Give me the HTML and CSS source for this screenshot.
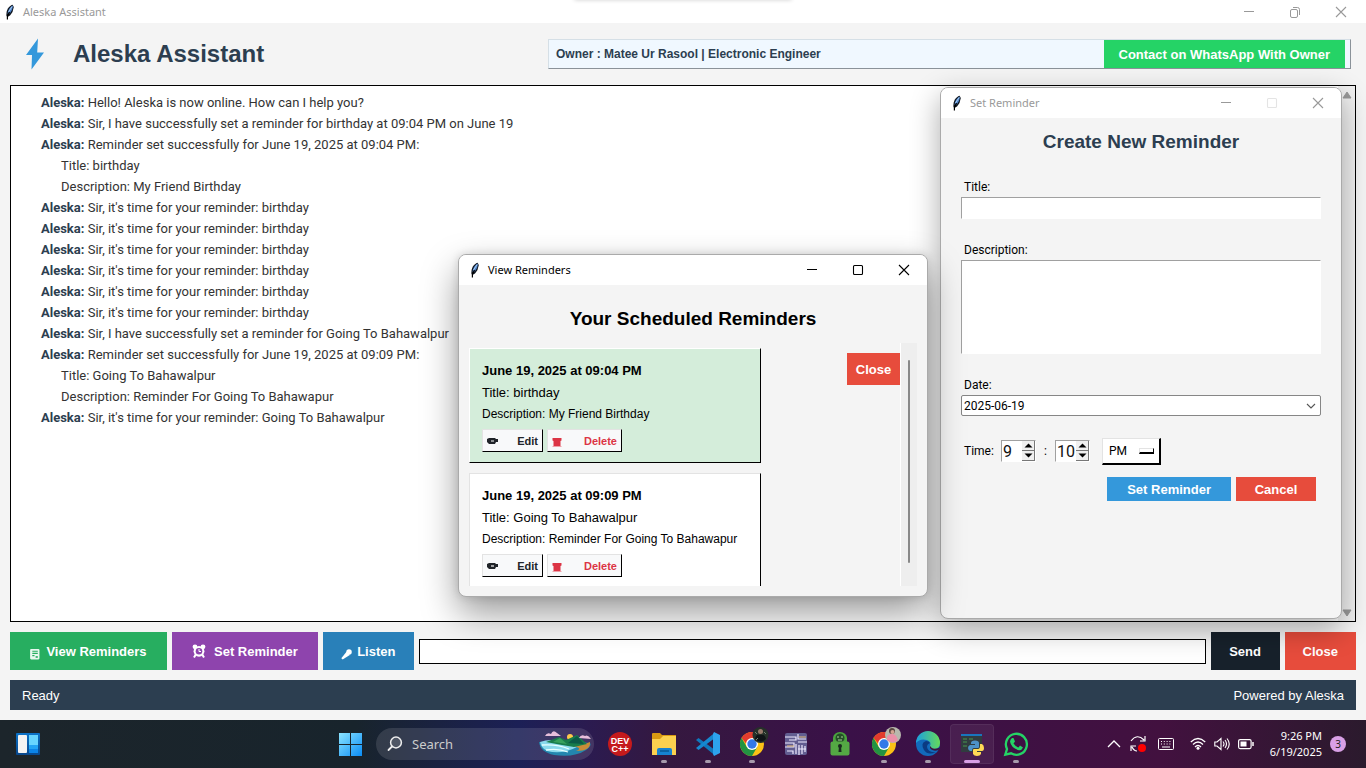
FILE: index.html
```html
<!DOCTYPE html>
<html lang="en">
<head>
<meta charset="utf-8">
<title>Aleska Assistant</title>
<link rel="stylesheet" href="styles.css">
</head>
<body>
<svg class="defs" aria-hidden="true">
  <symbol id="feather" viewBox="0 0 12 16">
    <path d="M8.600 .8C6 1.500 3.200 4.500 2.600 8L2.300 11.500 3.300 13 6 11.500 8.500 8 9.800 3z" fill="#10161f"/>
    <path d="M8.500 1.500C6 3 4 6 3.500 9.800L5.800 9.500 8 6 8.800 3z" fill="#4f86cc"/>
    <path d="M8 2.500L4.600 8" stroke="#a9cdf5" stroke-width="1"/>
    <path d="M5.500 8L3.400 12.500V15.500" stroke="#000" stroke-width="1.200" fill="none"/>
  </symbol>
  <symbol id="cross" viewBox="0 0 12 12"><path d="M1 1L11 11M11 1L1 11" stroke="currentColor" stroke-width="1.100" fill="none"/></symbol>
  <symbol id="dash" viewBox="0 0 12 12"><path d="M1 5.500H11" stroke="currentColor" fill="none"/></symbol>
  <symbol id="square" viewBox="0 0 12 12"><rect x="1.500" y="1.500" width="9" height="9" rx="1" stroke="currentColor" stroke-width="1.100" fill="none"/></symbol>
  <symbol id="pencil" viewBox="0 0 12 8"><path d="M0 2L2 1H8L9 2H11V5H9L8 7H2L0 5z" fill="#202429"/><path d="M4 4H7" stroke="#f8f9fa" stroke-width="1.200"/></symbol>
  <symbol id="bin" viewBox="0 0 10 10"><path d="M.5 1H9.500V3.500L8.500 4V9.500H1.500V4L.5 3.500z" fill="#dc3545"/><path d="M.5 9.500H9.500" stroke="#eea1a9"/></symbol>
  <symbol id="chrome" viewBox="0 0 24 24">
    <circle cx="12" cy="12" r="12" fill="#fbc116"/>
    <path d="M1.600 6A12 12 0 0 1 22.400 6H12L9 15z" fill="#e33b2e"/>
    <path d="M1.600 6A12 12 0 0 0 12 24L17.200 15 12 17 6.800 15z" fill="#229342"/>
    <circle cx="12" cy="12" r="6" fill="#fff"/><circle cx="12" cy="12" r="4.700" fill="#3378e8"/>
  </symbol>
</svg>

<main class="app">
  <header class="titlebar titlebar-main">
    <svg class="feather"><use href="#feather"/></svg>
    <span class="titlebar-text">Aleska Assistant</span>
    <div class="win-controls">
      <button aria-label="Minimize"><svg><use href="#dash"/></svg></button>
      <button aria-label="Restore"><svg viewBox="0 0 12 12"><rect x="1.500" y="3.500" width="7" height="8" rx="1.500" fill="none" stroke="currentColor"/><path d="M4 1.500H8.500Q10.500 1.500 10.500 3.500V9" fill="none" stroke="currentColor"/></svg></button>
      <button aria-label="Close window"><svg><use href="#cross"/></svg></button>
    </div>
    <div class="snap-handle"></div>
  </header>

  <section class="brand-row">
    <svg class="bolt" viewBox="0 0 20 32"><path d="M13 .5L1 17H7L6.500 31.500 19 14.500H12.200z" fill="#3498db"/></svg>
    <h1>Aleska Assistant</h1>
    <div class="owner">
      <span>Owner : Matee Ur Rasool | Electronic Engineer</span>
      <button class="whatsapp-btn">Contact on WhatsApp With Owner</button>
    </div>
  </section>

  <section class="chat">
    <div class="messages">
      <p><b>Aleska:</b> Hello! Aleska is now online. How can I help you?</p>
      <p><b>Aleska:</b> Sir, I have successfully set a reminder for birthday at 09:04 PM on June 19</p>
      <p><b>Aleska:</b> Reminder set successfully for June 19, 2025 at 09:04 PM:</p>
      <p class="detail">Title: birthday</p>
      <p class="detail">Description: My Friend Birthday</p>
      <p><b>Aleska:</b> Sir, it's time for your reminder: birthday</p>
      <p><b>Aleska:</b> Sir, it's time for your reminder: birthday</p>
      <p><b>Aleska:</b> Sir, it's time for your reminder: birthday</p>
      <p><b>Aleska:</b> Sir, it's time for your reminder: birthday</p>
      <p><b>Aleska:</b> Sir, it's time for your reminder: birthday</p>
      <p><b>Aleska:</b> Sir, it's time for your reminder: birthday</p>
      <p><b>Aleska:</b> Sir, I have successfully set a reminder for Going To Bahawalpur</p>
      <p><b>Aleska:</b> Reminder set successfully for June 19, 2025 at 09:09 PM:</p>
      <p class="detail">Title: Going To Bahawalpur</p>
      <p class="detail">Description: Reminder For Going To Bahawapur</p>
      <p><b>Aleska:</b> Sir, it's time for your reminder: Going To Bahawalpur</p>
    </div>
    <div class="chat-scroll">
      <svg viewBox="0 0 10 8"><path d="M5 1L9 7H1z" fill="#999" stroke="#999" stroke-linejoin="round"/></svg>
      <svg viewBox="0 0 10 8"><path d="M5 7L9 1H1z" fill="#999" stroke="#999" stroke-linejoin="round"/></svg>
    </div>
  </section>

  <section class="controls">
    <button class="action view-btn"><svg class="glyph-sm" viewBox="0 0 10 10"><rect x="1" y="0" width="8.500" height="9.500" rx="1" fill="#e9f7ef"/><path d="M3 2H8M3 4H8M3 6H5" stroke="#27ae60"/><path d="M6 6.500H8V8H6z" fill="#27ae60"/></svg>View Reminders</button>
    <button class="action set-btn"><svg class="glyph-lg" viewBox="0 0 14 14"><circle cx="3" cy="2.800" r="2.400" fill="#fff"/><circle cx="11" cy="2.800" r="2.400" fill="#fff"/><path d="M2 13.500L4 10M12 13.500L10 10" stroke="#fff" stroke-width="2"/><circle cx="7" cy="7.300" r="5.400" fill="#fff"/><circle cx="7" cy="7.300" r="3.300" fill="#8e44ad"/><path d="M7 5V7.500H9" stroke="#fff" fill="none"/></svg>Set Reminder</button>
    <button class="action listen-btn"><svg class="glyph-sm" viewBox="0 0 10 10"><circle cx="7.300" cy="2.700" r="2.500" fill="#fff"/><path d="M5 2.500L8 5.500 1.500 9.500 .3 8.500z" fill="#fff"/></svg>Listen</button>
    <input class="message-input" type="text" aria-label="Message">
    <button class="action send-btn">Send</button>
    <button class="action close-btn">Close</button>
  </section>

  <footer class="status"><span>Ready</span><span>Powered by Aleska</span></footer>
</main>

<section class="window window-set" aria-label="Set Reminder">
  <header class="titlebar inactive">
    <svg class="feather"><use href="#feather"/></svg>
    <span class="titlebar-text">Set Reminder</span>
    <div class="win-controls">
      <button aria-label="Minimize"><svg><use href="#dash"/></svg></button>
      <button aria-label="Maximize" disabled><svg><use href="#square"/></svg></button>
      <button aria-label="Close window"><svg><use href="#cross"/></svg></button>
    </div>
  </header>
  <form class="reminder-form">
    <h2>Create New Reminder</h2>
    <div class="field"><label for="r-title">Title:</label><input id="r-title" class="sunken" type="text"></div>
    <div class="field"><label for="r-desc">Description:</label><textarea id="r-desc" class="sunken"></textarea></div>
    <div class="field"><label for="r-date">Date:</label>
      <div class="date-box"><select id="r-date"><option>2025-06-19</option></select><svg viewBox="0 0 10 6"><path d="M1 1L5 5 9 1" fill="none" stroke="#555" stroke-width="1.100"/></svg></div></div>
    <div class="time-row">
      <label for="r-hour">Time:</label>
      <div class="spin"><input id="r-hour" type="number" value="9"><div class="steps"><button type="button" aria-label="Hour up"><svg viewBox="0 0 9 5"><path d="M4.500 .5L8.500 4.500H.5z"/></svg></button><button type="button" aria-label="Hour down"><svg viewBox="0 0 9 5"><path d="M4.500 4.500L8.500 .5H.5z"/></svg></button></div></div>
      <span class="colon">:</span>
      <div class="spin"><input aria-label="Minute" type="number" value="10"><div class="steps"><button type="button" aria-label="Minute up"><svg viewBox="0 0 9 5"><path d="M4.500 .5L8.500 4.500H.5z"/></svg></button><button type="button" aria-label="Minute down"><svg viewBox="0 0 9 5"><path d="M4.500 4.500L8.500 .5H.5z"/></svg></button></div></div>
      <div class="period"><select aria-label="AM or PM"><option>PM</option></select><i></i></div>
    </div>
    <div class="form-actions"><button type="button" class="primary">Set Reminder</button><button type="button" class="danger">Cancel</button></div>
  </form>
</section>

<section class="window window-view" aria-label="View Reminders">
  <header class="titlebar">
    <svg class="feather"><use href="#feather"/></svg>
    <span class="titlebar-text">View Reminders</span>
    <div class="win-controls">
      <button aria-label="Minimize"><svg><use href="#dash"/></svg></button>
      <button aria-label="Maximize"><svg><use href="#square"/></svg></button>
      <button aria-label="Close window"><svg><use href="#cross"/></svg></button>
    </div>
  </header>
  <h2>Your Scheduled Reminders</h2>
  <div class="list">
    <div class="cards">
      <article class="card done">
        <h3>June 19, 2025 at 09:04 PM</h3>
        <p class="card-title">Title: birthday</p>
        <p>Description: My Friend Birthday</p>
        <div class="card-actions"><button><svg class="pencil"><use href="#pencil"/></svg>Edit</button><button class="delete"><svg class="bin"><use href="#bin"/></svg>Delete</button></div>
      </article>
      <article class="card">
        <h3>June 19, 2025 at 09:09 PM</h3>
        <p class="card-title">Title: Going To Bahawalpur</p>
        <p>Description: Reminder For Going To Bahawapur</p>
        <div class="card-actions"><button><svg class="pencil"><use href="#pencil"/></svg>Edit</button><button class="delete"><svg class="bin"><use href="#bin"/></svg>Delete</button></div>
      </article>
    </div>
    <button class="danger list-close">Close</button>
    <div class="list-scroll"><i></i></div>
  </div>
</section>

<nav class="taskbar">
  <div class="tb-left">
    <button aria-label="Widgets"><svg class="icon" viewBox="0 0 24 24"><defs><linearGradient id="wg" x2="0" y2="1"><stop stop-color="#0b73c9"/><stop offset="1" stop-color="#08478c"/></linearGradient></defs><rect y="1" width="24" height="22" rx="1" fill="url(#wg)"/><rect x="2" y="3" width="9" height="18" rx="1" fill="#f3f3f3"/><path d="M13 3H22V13H13z" fill="#67d5ff"/><path d="M13 13H22V17H13z" fill="#22a4f5"/><path d="M13 17H22V21H13z" fill="#0b84e8"/></svg></button>
  </div>
  <div class="tb-center">
    <button class="app-btn" aria-label="Start"><svg class="icon" viewBox="0 0 24 24"><defs><linearGradient id="win" x2="1" y2="1"><stop stop-color="#8be4ff"/><stop offset="1" stop-color="#0a8df5"/></linearGradient></defs><path d="M1 1H12V12H1zM13 1H24V12H13zM1 13H12V24H1zM13 13H24V24H13z" fill="url(#win)"/></svg></button>
    <label class="search"><svg class="lens" viewBox="0 0 16 16"><circle cx="9" cy="6.500" r="5.400" fill="#ffffff22" stroke="#eee" stroke-width="1.500"/><path d="M5 10.500L1.500 14" stroke="#eee" stroke-width="1.800" stroke-linecap="round"/></svg><input type="text" placeholder="Search" aria-label="Search">
      <svg class="island" viewBox="0 0 54 26"><path d="M1 11Q2 21 16 24Q36 27 48 19Q54 15 52 12L30 10z" fill="#2386ae"/><path d="M2 11Q12 7 30 11L39 16Q24 24 9 20Q3 17 2 11z" fill="#8ad9ec"/><path d="M4 14Q20 13 31 18M8 19Q20 17 30 21" stroke="#e8ffff" stroke-width="1.300" fill="none"/><path d="M24 13Q42 16 52 11Q53 20 38 20 46 17 34 15z" fill="#c98c38"/><circle cx="32" cy="6" r="3" fill="#ffc94a"/><path d="M8 11L21 6 28 9 39 4 49 13 36 16 24 14z" fill="#187c4b"/><path d="M30 12L39 5 46 13z" fill="#0c5947"/><path d="M15 11L22 7 29 13z" fill="#37a15c"/><path d="M7 5Q9 1 13 3 15-2 19 2L23 5zM41 7Q43 3 47 5 50 3 53 8z" fill="#e7bfdb"/></svg></label>
    <div class="apps">
      <button class="app-btn" aria-label="Dev-C++"><svg class="icon" viewBox="0 0 24 24"><circle cx="12" cy="12" r="12" fill="#c51a1c"/><g class="dev-text" fill="#fff" text-anchor="middle"><text x="12" y="12">DEV</text><text x="12" y="20">C++</text></g></svg></button>
      <button class="app-btn open" aria-label="File Explorer"><svg class="icon" viewBox="0 0 24 24"><path d="M0 2Q0 1 1 1H8L10 3H24V8H0z" fill="#d99a12"/><path d="M0 7H8L11 4H24V23H0z" fill="#fbd14f"/><path d="M5 23V18Q5 16 7 16H18Q20 16 20 18V23z" fill="#1683d0"/><path d="M8 19H17" stroke="#075895" stroke-width="1.500"/></svg></button>
      <button class="app-btn open" aria-label="Visual Studio Code"><svg class="icon" viewBox="0 0 24 24"><path d="M0 8L2.500 6 19 18V23.500z" fill="#0f78bd"/><path d="M0 16L2.500 18 19 6V.5z" fill="#1688cf"/><path d="M18 0L24 3V21L18 24 17 22V2z" fill="#2da3ee"/></svg></button>
      <button class="app-btn open" aria-label="Chrome"><svg class="icon" viewBox="0 0 24 24"><use href="#chrome"/><g><circle cx="20.500" cy="3" r="8" fill="#263029"/><circle cx="20.500" cy="-.5" r="2.500" fill="#9a7b6b"/><path d="M15 7Q16 2 20 3 25 2 26 7 21 12 15 7" fill="#0e1316"/><path d="M15 0L17 2M24 0L26 2M16 8L18 6" stroke="#718071"/></g></svg></button>
      <button class="app-btn" aria-label="Circuit editor"><svg class="icon" viewBox="0 0 24 24"><rect x="1" y="1" width="22" height="22" rx="2" fill="#625e91"/><path d="M1 5H12V8H5M1 11H10V15H1M14 2V7H22M14 10H23M3 19H9V22M12 12V22M15 23V13M18 13V22M21 14V20M14 17H22" stroke="#eeeaff" stroke-width="1.200" fill="none"/><path d="M3 14H10M15 5H22" stroke="#e3bd79"/></svg></button>
      <button class="app-btn" aria-label="Lock"><svg class="icon" viewBox="0 0 24 24"><path d="M5 10V6A7 6 0 0 1 19 6V10" fill="#4aa33e"/><circle cx="12" cy="6" r="4.500" fill="#244e27"/><path d="M9 5H11M13 5H15M10 8H14" stroke="#a6d197"/><rect x="2.500" y="9.500" width="19" height="14" rx="2" fill="#54a944"/><circle cx="12" cy="14" r="2" fill="#1b2b20"/><path d="M11 14H13L13.500 20H10.500z" fill="#1b2b20"/></svg></button>
      <button class="app-btn open" aria-label="Chrome, second profile"><svg class="icon" viewBox="0 0 24 24"><use href="#chrome"/><circle cx="21" cy="3" r="8" fill="#b8b8ad"/><circle cx="20" cy="-1" r="3" fill="#594640"/><circle cx="20.500" cy="0" r="2" fill="#d4a591"/><path d="M15 8Q14 3 19 2 24 1 26 8 21 13 15 8" fill="#eb8fa8"/></svg></button>
      <button class="app-btn open" aria-label="Edge"><svg class="icon" viewBox="0 0 24 24"><defs><linearGradient id="eg" x2="1"><stop stop-color="#1b9fe0"/><stop offset="1" stop-color="#65d95a"/></linearGradient></defs><circle cx="12" cy="12" r="12" fill="#126abb"/><path d="M0 11A12 12 0 0 1 24 11Q24 17 17 17 13 17 14 14 16 10 11 8 4 6 0 11" fill="url(#eg)"/><path d="M10 9Q4 11 8 18 12 24 20 20 12 21 11 15 11 12 14 11 13 9 10 9" fill="#0b3b82"/><path d="M14.500 14Q16 18.500 24 15.500L22.500 18Q18 19.500 15.500 17.500 13 16 14.500 14" fill="#3b123d"/></svg></button>
      <button class="app-btn active" aria-label="Python"><svg class="icon" viewBox="0 0 24 24"><rect x="1" y="2" width="21" height="18" fill="#303c3f"/><path d="M1 2H22V4H1z" fill="#1975bd"/><path d="M3 7H7M9 7H13M3 10H7M3 14H7" stroke="#3f7849" stroke-width="1.500"/><path d="M11 11Q11 8.500 15 8.500T19 11V15Q19 16 18 16H14Q12 16 12 19H10Q8 18 8 16T10 13H15V12H11z" fill="#4d91c7"/><path d="M20 12H22Q24 13 24 16T22 19H17V20H21V22Q20 24 17 24T13 22V18Q13 17 14 17H18Q20 17 20 14z" fill="#ffd955"/></svg></button>
      <button class="app-btn open" aria-label="WhatsApp"><svg class="icon" viewBox="0 0 24 24"><path d="M1.300 22.700L3 17A10.500 10.500 0 1 1 7 21.300z" fill="none" stroke="#25d366" stroke-width="2.300"/><path d="M8 6L9.500 6 11 9.500 9.500 11.500Q11.500 14.500 14.500 15.500L16 13.500 19 15.500Q17.500 19 14 18 7 15.500 6 9.500 6.300 7 8 6" fill="#25d366"/></svg></button>
    </div>
  </div>
  <div class="tray">
    <svg viewBox="0 0 16 16"><path d="M2 11L8 5 14 11" stroke="#fff" stroke-width="1.300" fill="none"/></svg>
    <svg class="sync" viewBox="0 0 16 16"><path d="M1 5Q7-3 14 4M15 0V5H10M1 15V10H6M2 11Q4 15 7 15" stroke="#fff" stroke-width="1.200" fill="none"/><circle cx="12" cy="12" r="4" fill="#f00"/></svg>
    <svg class="keyboard" viewBox="0 0 16 16"><rect x=".5" y="2.500" width="15" height="11" rx="1" fill="none" stroke="#fff"/><path d="M3 5.500H13M3 8H13" stroke="#fff" stroke-width="1.200" stroke-dasharray="1 1.800"/><path d="M4 11H12" stroke="#fff"/></svg>
    <svg viewBox="0 0 16 16"><path d="M.8 6Q8-1 15.200 6M3 8.500Q8 3.500 13 8.500M5 11Q8 8 11 11" stroke="#fff" stroke-width="1.300" fill="none"/><circle cx="8" cy="12.300" r="1.500" fill="#fff"/></svg>
    <svg viewBox="0 0 16 16"><path d="M.8 6V10H3L7 13.500V2.500L3 6zM9 5.500Q11 8 9 10.500M11 4Q14 8 11 12M13 2.500Q17.500 8 13 13.500" stroke="#fff" stroke-width="1.100" fill="none"/></svg>
    <svg viewBox="0 0 16 16"><rect x=".6" y="3.600" width="12.500" height="9" rx="1.500" fill="none" stroke="#fff" stroke-width="1.200"/><path d="M2.500 5.500H8.500V10.500H2.500z" fill="#fff"/><path d="M15 6V10" stroke="#fff" stroke-width="1.500"/></svg>
    <div class="clock"><span>9:26 PM</span><span>6/19/2025</span></div>
    <span class="count">3</span>
  </div>
</nav>
</body>
</html>
```
FILE: styles.css
```css
* { box-sizing: border-box; }
html, body { height: 100%; }
body {
  margin: 0;
  display: flex;
  flex-direction: column;
  overflow: hidden;
  background: #f4f4f4;
  font-family: "Liberation Sans", Arial, sans-serif;
  color: #000;
}
h1, h2, h3, p { margin: 0; }
button, input, select, textarea { font: inherit; color: inherit; border: 0; border-radius: 0; padding: 0; margin: 0; background: none; outline: 0; }
svg { display: block; flex: none; }
.defs { position: absolute; width: 0; height: 0; }

.app { flex: 1; min-height: 0; display: flex; flex-direction: column; position: relative; }

.titlebar { display: flex; align-items: center; flex: none; height: 30px; padding-bottom: 1px; background: #fff; font-family: "Noto Sans", sans-serif; font-size: 11px; }
.titlebar-text { flex: 1; }
.feather { width: 12px; height: 16px; }
.win-controls { display: flex; }
.win-controls button { width: 46px; height: 23px; display: grid; place-items: center; }
.win-controls svg { width: 12px; height: 12px; }
.titlebar-main { height: 23px; color: #999; padding: 0 2px 0 4px; gap: 7px; position: relative; }
.snap-handle { position: absolute; left: 42%; right: 42%; top: -4px; height: 4px; border-radius: 4px; box-shadow: 0 0 4px #0003; }
.inactive { color: #999; }
.inactive button:disabled { color: #e4e4e4; }

.brand-row { display: flex; align-items: center; height: 62px; padding: 0 15px 0 25px; flex: none; }
.bolt { width: 20px; height: 32px; margin-right: 28px; }
.brand-row h1 { flex: 475; font-size: 24px; line-height: 28px; color: #2c3e50; }
.owner { flex: 789; display: flex; align-items: center; justify-content: space-between; height: 30px; background: #f0f8ff; border: 1px solid #d5dfe6; border-right-color: #8a9299; border-bottom-color: #8a9299; padding: 0 5px 0 7px; font-size: 12px; font-weight: bold; color: #2c3e50; }
.whatsapp-btn { align-self: stretch; padding: 0 15px; background: #25d366; color: #fff; font-size: 13px; font-weight: bold; }

.chat { flex: 1; min-height: 0; margin: 0 10px; border: 1px solid #000; background: #fff; display: flex; }
.messages { flex: 1; padding: 6px 30px; font-family: Roboto, "Noto Sans", sans-serif; font-size: 13px; line-height: 21px; color: #333; }
.messages b { color: #2c3e50; }
.messages .detail { padding-left: 20px; }
.chat-scroll { width: 17px; background: #f0f0f0; display: flex; flex-direction: column; align-items: center; justify-content: space-between; padding: 5px 0 4px; }
.chat-scroll svg { width: 10px; height: 8px; }

.controls { display: flex; align-items: center; gap: 5px; padding: 10px; flex: none; }
.action { height: 38px; display: flex; align-items: center; justify-content: center; padding: 0 18px; color: #fff; font-size: 13px; font-weight: bold; white-space: nowrap; }
.view-btn { background: #27ae60; gap: 6px; padding: 0 20px 0 19px; min-width: 157px; }
.set-btn { background: #8e44ad; gap: 8px; padding: 0 20px; }
.listen-btn { background: #2980b9; gap: 5px; min-width: 91px; }
.send-btn { background: #17212b; min-width: 69px; }
.close-btn { background: #e74c3c; min-width: 71px; }
.glyph-sm { width: 11px; height: 11px; margin-top: 7px; }
.glyph-lg { width: 14px; height: 14px; }
.message-input { flex: 1; min-width: 0; height: 25px; border: 1px solid #000; background: #fff; padding: 0 6px; font-size: 13px; }

.status { display: flex; align-items: center; justify-content: space-between; flex: none; height: 30px; margin: 0 10px 10px; padding: 0 12px; background: #2c3e50; color: #fff; font-size: 13px; }

.window { position: absolute; border: 1px solid #aaa; border-radius: 8px; background: #f4f4f4; overflow: hidden; display: flex; flex-direction: column; }
.window .titlebar { padding-left: 10px; gap: 7px; }
.window h2 { text-align: center; font-size: 19px; line-height: 24px; }
.window-set { left: 940px; top: 87px; width: 402px; height: 532px; box-shadow: 0 10px 30px #0005; }
.window-view { left: 458px; top: 254px; width: 470px; height: 343px; box-shadow: 0 16px 36px #0006, 0 0 8px #0002; }

.reminder-form { display: flex; flex-direction: column; padding: 12px 20px; font-family: Roboto, "Noto Sans", sans-serif; font-size: 12px; }
.reminder-form h2 { font-family: "Liberation Sans", Arial, sans-serif; color: #2c3e50; margin-bottom: 24px; }
.field { display: flex; flex-direction: column; margin-bottom: 22px; }
.field label { padding-left: 3px; line-height: 18px; margin-bottom: 1px; }
.sunken { background: #fff; border: 1px solid #fff; border-top-color: #a0a0a0; border-left-color: #a0a0a0; height: 22px; resize: none; padding: 0 3px; }
textarea.sunken { height: 94px; }
.date-box { display: flex; align-items: center; height: 21px; border: 1px solid #868686; border-radius: 2px; background: #fff; padding-right: 4px; }
.date-box select { flex: 1; appearance: none; padding-left: 2px; }
.date-box svg { width: 10px; height: 6px; }
.time-row { display: flex; align-items: center; height: 26px; padding-left: 3px; }
.time-row label { width: 37px; }
.spin { display: flex; width: 35px; height: 22px; background: #fff; border: 1px solid #fff; border-top-color: #a0a0a0; border-left-color: #a0a0a0; }
.spin input { width: 20px; appearance: textfield; font-size: 16px; padding-left: 1px; color: #111; }
.spin input::-webkit-inner-spin-button { appearance: none; margin: 0; }
.steps { flex: 1; display: flex; flex-direction: column; }
.steps button { flex: 1; display: grid; place-items: center; background: #f0f0f0; border-right: 1px solid #777; border-bottom: 1px solid #777; }
.steps svg { width: 9px; height: 5px; }
.colon { width: 19px; text-align: center; }
.period { display: flex; align-items: center; width: 59px; height: 27px; margin-left: 12px; background: #fff; border: 1px solid #e3e3e3; border-right: 2px solid #000; border-bottom: 2px solid #000; padding: 0 5px 0 6px; }
.period select { flex: 1; width: 30px; appearance: none; }
.period i { width: 15px; height: 6px; border: 1px solid #e3e3e3; border-right: 1px solid #000; border-bottom: 2px solid #000; }
.form-actions { display: flex; justify-content: flex-end; gap: 5px; padding: 13px 5px 0; font-family: "Liberation Sans", Arial, sans-serif; font-size: 13px; font-weight: bold; }
.form-actions button { height: 24px; min-width: 80px; padding: 0 18px; color: #fff; }
.form-actions .primary { background: #3498db; padding: 0 20px; }
.danger { background: #e74c3c; }

.window-view h2 { padding: 22px 0 12px; }
.list { flex: 1; min-height: 0; display: flex; align-items: flex-start; margin: 0 10px 10px; overflow: hidden; }
.cards { width: 292px; display: flex; flex-direction: column; gap: 10px; padding-top: 5px; }
.card { height: 115px; padding: 12px 12px 0; background: #fff; border: 1px solid #e3e3e3; border-right-color: #000; border-bottom-color: #000; font-size: 12px; white-space: nowrap; }
.card.done { background: #d4edda; border-top-color: #fff; border-left-color: #fff; }
.card h3 { font-size: 13px; line-height: 20px; }
.card p { line-height: 21px; }
.card .card-title { font-size: 13px; line-height: 23px; }
.card-actions { display: flex; gap: 4px; margin-top: 4px; }
.card-actions button { display: flex; align-items: center; justify-content: space-between; width: 61px; height: 23px; padding: 0 4px; background: #f8f9fa; border: 1px solid #e3e3e3; border-right-color: #000; border-bottom-color: #000; font-size: 11px; font-weight: bold; color: #212529; }
.card-actions .delete { width: 75px; color: #dc3545; }
.pencil { width: 12px; height: 8px; }
.bin { width: 10px; height: 10px; margin-top: 3px; }
.list-close { margin: 10px 0 0 auto; width: 53px; height: 32px; color: #fff; font-size: 13px; font-weight: bold; }
.list-scroll { align-self: stretch; width: 17px; background: #eee; border-left: 1px solid #fff; display: flex; justify-content: center; padding: 17px 0 23px; }
.list-scroll i { width: 2px; background: #888; border-radius: 1px; }

.taskbar { position: relative; flex: none; height: 48px; display: grid; grid-template-columns: 1fr auto 1fr; align-items: center; background: linear-gradient(90deg, #1c252b 0, #18242c 26%, #1c2056 38%, #2b1b50 43%, #35183f 49%, #3a1148 62%, #42113f 85%, #2b1a2d 100%); color: #fff; font-family: "Noto Sans", sans-serif; }
.icon { width: 24px; height: 24px; overflow: visible; }
.tb-left { display: flex; padding-left: 16px; }
.tb-center { display: flex; align-items: center; gap: 4px; }
.app-btn { position: relative; width: 44px; height: 40px; display: grid; place-items: center; }
.apps { display: flex; }
.open::after, .active::after { content: ""; position: absolute; bottom: 1px; left: 19px; width: 6px; height: 3px; border-radius: 2px; background: #a79aac; }
.active::after { left: 14px; width: 16px; background: #d9a0e6; }
.active { background: #ffffff10; border-radius: 4px; box-shadow: inset 0 0 0 1px #ffffff10; }
.dev-text { font: bold 9px "Liberation Sans", Arial, sans-serif; }
.search { display: flex; align-items: center; width: 218px; height: 32px; border-radius: 16px; background: #ffffff1e; padding: 0 2px 0 11px; }
.lens { width: 16px; height: 16px; }
.search input { flex: 1; min-width: 0; padding-left: 9px; font-size: 13px; }
.search input::placeholder { color: #ccc; opacity: 1; }
.island { width: 54px; height: 26px; }
.tray { display: flex; align-items: center; justify-content: flex-end; padding-right: 20px; gap: 8px; }
.tray svg { width: 16px; height: 16px; }
.keyboard { margin-left: 4px; }
.keyboard + svg { margin-left: 8px; }
.clock { display: flex; flex-direction: column; align-items: flex-end; width: 60px; font-size: 11px; line-height: 16px; }
.count { width: 16px; height: 16px; border-radius: 50%; background: #d9a0e6; color: #222; font-size: 10px; line-height: 16px; text-align: center; }
```
